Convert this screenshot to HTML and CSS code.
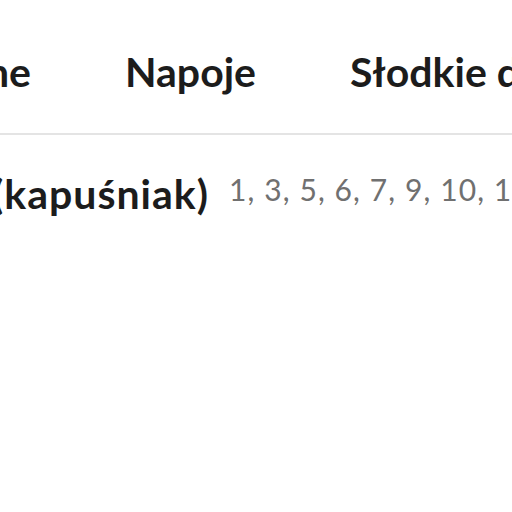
FILE: index.html
```html
<!DOCTYPE html>
<html lang="pl">
<head>
<meta charset="utf-8">
<link rel="stylesheet" href="styles.css">
</head>
<body>
<div class="page">
  <nav class="nav">
    <div class="nav-clip"><span class="nav-item">Dania główne</span></div>
    <span class="nav-item">Napoje</span>
    <span class="nav-item">Słodkie desery</span>
  </nav>
  <div class="divider"></div>
  <div class="dish">
    <div class="dish-clip"><span class="dish-name">Kwaśnica (kapuśniak)</span></div>
    <span class="allergens">1, 3, 5, 6, 7, 9, 10, 11, 12</span>
  </div>
</div>
</body>
</html>
```

FILE: styles.css
```css
html, body {
  margin: 0;
  padding: 0;
  background: #ffffff;
  overflow: hidden;
}
body {
  font-family: Lato, "Open Sans", sans-serif;
  color: #1f1f1f;
}
.page {
  width: 512px;
  height: 512px;
  overflow: hidden;
}
.nav {
  display: flex;
  align-items: flex-start;
  gap: 94px;
  padding-top: 48px;
  white-space: nowrap;
  font-size: 41px;
  font-weight: 700;
  line-height: 48px;
}
.nav-clip {
  width: 31px;
  flex: none;
  overflow: hidden;
  display: flex;
  justify-content: flex-end;
}
.nav-item {
  flex: none;
  color: #1c1c1c;
}
.divider {
  height: 2px;
  background: #e4e4e4;
  margin-top: 37px;
}
.dish {
  display: flex;
  align-items: flex-start;
  gap: 20px;
  padding-top: 35px;
  white-space: nowrap;
}
.dish-clip {
  width: 209px;
  flex: none;
  overflow: hidden;
  display: flex;
  justify-content: flex-end;
}
.dish-name {
  font-size: 41px;
  font-weight: 700;
  line-height: 48px;
  letter-spacing: 1px;
  color: #1c1c1c;
  flex: none;
}
.allergens {
  font-size: 30px;
  line-height: 36px;
  letter-spacing: 1.1px;
  margin-top: 1px;
  color: #707070;
  flex: none;
}
```
